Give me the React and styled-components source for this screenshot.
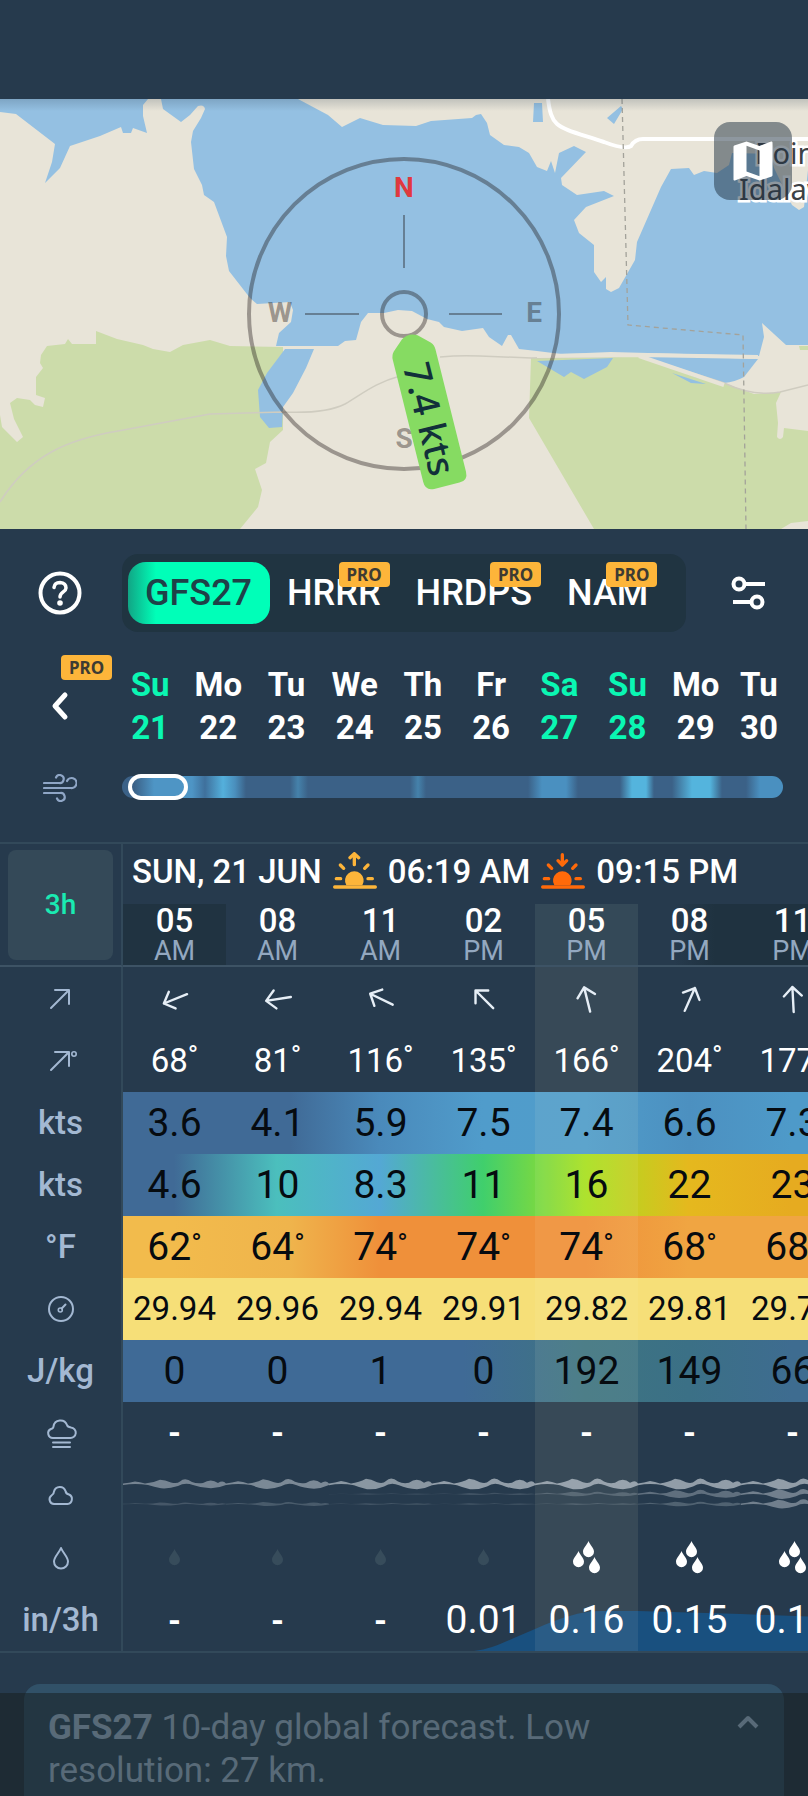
import React from "react";
import { createGlobalStyle, styled } from "styled-components";
import { MdMap } from "react-icons/md";

const models = [
  { name: "GFS27", active: true },
  { name: "HRRR", pro: true },
  { name: "HRDPS", pro: true },
  { name: "NAM", pro: true },
];

const days = [
  { name: "Su", date: 21, weekend: true },
  { name: "Mo", date: 22 },
  { name: "Tu", date: 23 },
  { name: "We", date: 24 },
  { name: "Th", date: 25 },
  { name: "Fr", date: 26 },
  { name: "Sa", date: 27, weekend: true },
  { name: "Su", date: 28, weekend: true },
  { name: "Mo", date: 29 },
  { name: "Tu", date: 30 },
];

const hours = ["05 AM", "08 AM", "11 AM", "02 PM", "05 PM", "08 PM", "11 PM"];
const directions = [68, 81, 116, 135, 166, 204, 177];
const windSpeed = ["3.6", "4.1", "5.9", "7.5", "7.4", "6.6", "7.3"];
const windGust = ["4.6", "10", "8.3", "11", "16", "22", "23"];
const temperature = [62, 64, 74, 74, 74, 68, 68];
const pressure = ["29.94", "29.96", "29.94", "29.91", "29.82", "29.81", "29.79"];
const cape = [0, 0, 1, 0, 192, 149, 66];
const rain = ["-", "-", "-", "0.01", "0.16", "0.15", "0.14"];
const current = 4;

// [opacity, thickness] of the high, middle and low cloud layer
const clouds = [
  [[0.45, 1], [0, 0], [0.18, 0.35]],
  [[0.48, 1.1], [0, 0], [0.2, 0.45]],
  [[0.56, 1.2], [0.12, 0.15], [0.16, 0.2]],
  [[0.6, 1.2], [0.15, 0.25], [0.16, 0.15]],
  [[0.6, 1.2], [0.22, 0.5], [0.18, 0.2]],
  [[0.6, 1.2], [0.32, 0.9], [0.24, 0.5]],
  [[0.6, 1.2], [0.42, 1.1], [0.42, 1]],
];

const rainAreas = [
  null,
  null,
  null,
  "M42 62C62 60 76 51 103 40V62Z",
  "M0 40C25 29 45 22 66 22H103V62H0Z",
  "M0 22L103 25V62H0Z",
  "M0 25L103 29V62H0Z",
];

const WindArrow = ({ degrees }) => (
  <Icon width="32" height="32" viewBox="-16 -16 32 32">
    <g transform={`rotate(${degrees + 180})`} stroke="#e6eef6" strokeWidth="2.4">
      <path d="M0 13V-12M-9 -3L0 -12L9 -3" />
    </g>
  </Icon>
);

const CloudCell = ({ layers }) => (
  <CellDrawing viewBox="0 0 103 62" preserveAspectRatio="none">
    {layers.map(([opacity, scale], i) => (
      <path
        key={i}
        transform={`translate(0 ${20 + i * 10}) scale(1 ${scale})`}
        opacity={opacity}
        fill="#d9e0e6"
        d="M0 -.5Q6 -1 12 -2.5Q17 -2 22 -.5Q30 -1 37 -4.3Q42 -4 48 -1.5Q54 0 57 -2.5Q62 -7 69 -2Q74 0 80 -1Q88 -6 95 -1Q100 -4 103 -.5V1Q96 4 88 4.3Q78 4 70 1Q62 -2 55 2Q46 5 38 4.3Q31 3 25 1Q12 -1 0 1Z"
      />
    ))}
  </CellDrawing>
);

const Drop = ({ x = 0, y = 0 }) => (
  <path
    transform={`translate(${x} ${y})`}
    d="M5.5 0C7 4 11 7 11 10.7A5.5 5.5 0 0 1 0 10.7C0 7 4 4 5.5 0Z"
  />
);

const SunIcon = ({ color, down }) => (
  <Icon width="44" height="38" viewBox="0 0 132 114" stroke={color} strokeWidth="10">
    <path d="M5 105H127M64 8V38M10 80H23M105 80H118M22 39L32 49M105 39L95 49" />
    <path d={down ? "M51 26L64 39L77 26" : "M51 17L64 5L77 17"} />
    <path d="M40 100A28 28 0 1 1 88 100Z" fill={color} stroke="none" />
  </Icon>
);

const MapDrawing = () => (
  <MapSvg viewBox="0 0 808 430" preserveAspectRatio="xMidYMid slice">
    <defs>
      <linearGradient id="mapShade" x1="0" y1="0" x2="0" y2="1">
        <stop offset="0" stopColor="#263a4d" stopOpacity="0.2" />
        <stop offset="1" stopColor="#263a4d" stopOpacity="0" />
      </linearGradient>
    </defs>
    <rect width="808" height="430" fill="#e8e4d8" />
    <g fill="#ccdcaa">
      <path d="M0 430V316L2 328L17 343L23 338L14 320L10 304L17 299L30 301L35 306L43 308L45 299L36 296V278L43 269L40 264L41 256L47 247L65 245L68 240L72 245H96V232L117 240L143 246L153 250L170 253L183 246L210 241L230 247L283 248V331L270 343L266 364L255 370L262 391L258 408L240 430Z" />
      <path d="M531 259L611 258L639 258L724 284L754 295L781 293L776 304L778 324L777 338Q780 342 783 338L784 329L808 332V422L791 424L781 430H594L529 319Z" />
      <path d="M799 247H808V251H800Z" />
    </g>
    <g fill="#94c0e2">
      <path d="M0 0V13L16 15L55 45L52 63L45 84L60 69L70 47L100 37L121 28L123 34H131L133 29L147 34L143 17V6L148 0Z" />
      <path d="M161 0L163 10L181 23L190 16L198 7Q204 5 205 10L201 19L193 32L191 43L194 70L202 86L204 96L214 103L227 138L226 157L229 172L250 199L257 205L290 203L293 211L291 223L279 234L276 247H338L345 242L356 241L361 223L368 214H384L398 211L412 212L427 220L439 223L444 228L462 232L483 229L489 238L502 247L508 236H511L519 250L537 252L561 255L611 253L759 257L764 238L762 224L786 246H808V71L804 108L799 111L792 106L774 69L770 55L732 54L729 66L717 74L704 72L694 76L689 69L671 70L661 88L637 143L635 161L619 189L611 193L606 190V178L601 183L594 173V146L579 134L574 121L586 108L614 97L604 92L577 96L562 86L561 79L586 53L574 47L559 54L555 74L551 62L547 72L537 68L529 54L519 48L504 46L490 36L487 24L481 15L476 16L472 19L431 22L416 27L383 26L360 19L342 28L328 16L298 0Z" />
      <path d="M285 250H314L306 269L293 294L283 308L282 328L269 329L260 318L258 291L267 274Z" />
      <path d="M537 262L564 278L571 273L584 280L607 268L613 259Z" />
      <path d="M639 256L758 260L744 278Q735 283 724 284L697 279Z" />
      <path d="M672 274L706 285L691 284ZM534 4H542L543 23H533ZM607 19L621 7L623 10L614 25Z" />
    </g>
    <path d="M548 0C552 30 556 27 604 43Q625 51 631 47Q635 40 643 40H808" fill="none" stroke="#fff" strokeWidth="4" />
    <g fill="none" stroke="#cfccc0" strokeWidth="1.5">
      <path d="M0 403C30 355 70 340 118 332L210 315L283 313Q325 315 345 305C365 293 375 284 400 277" />
      <path d="M440 258Q460 256 480 257L531 259L639 257L724 284Q754 298 780 293L808 286" />
    </g>
    <path d="M537 257L639 256L758 258" fill="none" stroke="#e8e4d8" strokeWidth="4" />
    <path d="M639 257L724 286" stroke="#e8e4d8" strokeWidth="4" />
    <path d="M622 0L628 226L743 236L746 430" fill="none" stroke="#a3a29a" strokeWidth="1.3" strokeDasharray="5 4" />
    <PlaceName x="755" y="65">Point</PlaceName>
    <PlaceName x="739" y="101">Idalaw</PlaceName>
    <rect width="808" height="12" fill="url(#mapShade)" />
    <g fill="none" stroke="#1e1614" strokeOpacity="0.38">
      <circle cx="404" cy="215" r="155" strokeWidth="4" />
      <circle cx="404" cy="215" r="22" strokeWidth="4" />
      <path d="M404 116V169M305 215H359M449 215H502" strokeWidth="2" />
    </g>
    <CompassLetter x="404" y="98" $north>N</CompassLetter>
    <CompassLetter x="280" y="223">W</CompassLetter>
    <CompassLetter x="534" y="223">E</CompassLetter>
    <CompassLetter x="404" y="349">S</CompassLetter>
    <g transform="translate(404 215) rotate(76)">
      <path
        d="M24 -8L34 -19Q37 -22 42 -22H168Q177 -22 177 -13V13Q177 22 168 22H42Q37 22 34 19L24 8Q19 0 24 -8Z"
        fill="#86db62"
      />
      <SpeedText x="108" y="14">7.4 kts</SpeedText>
    </g>
  </MapSvg>
);

const HelpIcon = () => (
  <Icon width="44" height="44" viewBox="0 0 44 44" stroke="#fff" strokeWidth="4">
    <circle cx="22" cy="22" r="19.5" />
    <path d="M16 16.5Q16.5 11.5 22 11.5Q28 12 28 17C28 21 22 21 22 26" strokeWidth="3.5" />
    <circle cx="22" cy="32" r="2.8" fill="#fff" stroke="none" />
  </Icon>
);

const SettingsIcon = () => (
  <Icon width="36" height="36" viewBox="0 0 36 36" stroke="#fff" strokeWidth="4">
    <circle cx="9" cy="9" r="5.5" />
    <circle cx="27" cy="27" r="5.5" />
    <path d="M15 9H35M3 27H21" strokeLinecap="butt" />
  </Icon>
);

const WindIcon = () => (
  <Icon width="34" height="28" viewBox="0 0 34 28" stroke="#8fa6c6" strokeWidth="2.2">
    <path d="M1 9H16A4 4 0 1 0 13 3.5" />
    <path d="M1 14H28A5 5 0 1 0 24 7" />
    <path d="M1 19H17A4 4 0 1 1 14 24.5" />
  </Icon>
);

const SideArrow = ({ degree }) => (
  <Icon width="32" height="24" viewBox="0 0 32 24" stroke="#a3b8d2" strokeWidth="2">
    <path d="M6 21L24 3M10 3H24V17" />
    {degree && <circle cx="29" cy="5" r="2.2" strokeWidth="1.6" />}
  </Icon>
);

const GaugeIcon = () => (
  <Icon width="28" height="28" viewBox="0 0 28 28" stroke="#a3b8d2" strokeWidth="2">
    <circle cx="14" cy="14" r="12" />
    <circle cx="13.3" cy="15" r="2" strokeWidth="1.6" />
    <path d="M14.7 13.5L18.5 9.5" />
  </Icon>
);

const FogIcon = () => (
  <Icon width="32" height="32" viewBox="0 0 32 32" stroke="#a3b8d2" strokeWidth="2">
    <path d="M8 21H25A5 5 0 0 0 26 10.5Q22.5 10 22 8A7 7 0 0 0 8.5 9.5Q8.3 11.5 6 12A4.7 4.7 0 0 0 8 21Z" />
    <path d="M8 25.5H25M8 30H25" />
  </Icon>
);

const CloudIcon = () => (
  <Icon width="28" height="24" viewBox="0 0 28 24" stroke="#a3b8d2" strokeWidth="2">
    <path d="M7 21H20.5A5 5 0 0 0 22 11.5Q19 11 18.5 8A6 6 0 0 0 7 8.5Q7 11 4.5 12.5A4.7 4.7 0 0 0 7 21Z" />
  </Icon>
);

const DropIcon = () => (
  <Icon width="18" height="24" viewBox="0 0 18 24" stroke="#a3b8d2" strokeWidth="2">
    <path d="M9 2C11 7 16 11 16 15.5A7 7 0 0 1 2 15.5C2 11 7 7 9 2Z" />
  </Icon>
);

const Row = ({ label, height = 62, background, tone, size, children }) => (
  <StyledRow $height={height} $background={background}>
    <RowLabel scope="row">{label}</RowLabel>
    {children.map((child, i) => (
      <Cell key={i} $current={i === current} $dark={tone === "dark"} $size={size}>
        {child}
      </Cell>
    ))}
  </StyledRow>
);

const App = () => {
  return (
    <Page>
      <GlobalStyle />
      <StatusBar />
      <MapPanel>
        <MapDrawing />
        <MapButton aria-label="Map layers">
          <MdMap size={52} />
        </MapButton>
      </MapPanel>

      <ModelRow>
        <IconButton aria-label="Help">
          <HelpIcon />
        </IconButton>
        <ModelBar>
          {models.map(({ name, active, pro }) => (
            <ModelButton key={name} $active={active}>
              {name}
              {pro && <ModelBadge>PRO</ModelBadge>}
            </ModelButton>
          ))}
        </ModelBar>
        <IconButton aria-label="Settings">
          <SettingsIcon />
        </IconButton>
      </ModelRow>

      <DayRow>
        <IconButton aria-label="Previous days">
          <Icon width="20" height="30" viewBox="0 0 20 30" stroke="#fff" strokeWidth="5">
            <path d="M15 4L5 15L15 26" />
          </Icon>
          <BackBadge>PRO</BackBadge>
        </IconButton>
        <DayList>
          {days.map(({ name, date, weekend }) => (
            <Day key={date} $weekend={weekend}>
              <span>{name}</span>
              <span>{date}</span>
            </Day>
          ))}
        </DayList>
      </DayRow>

      <StripRow>
        <StripLabel htmlFor="timeline">
          <WindIcon />
        </StripLabel>
        <Timeline id="timeline" type="range" aria-label="Forecast time" step="any" defaultValue="1" />
      </StripRow>

      <TableFrame>
        <Table>
          <colgroup>
            <LabelCol />
            {hours.map((hour) => (
              <HourCol key={hour} />
            ))}
          </colgroup>
          <thead>
            <tr>
              <StepCell rowSpan="2">
                <StepButton>3h</StepButton>
              </StepCell>
              <DateCell colSpan="7">
                <DateLine>
                  <span>SUN, 21 JUN</span>
                  <SunIcon color="#fdb53a" />
                  <span>06:19 AM</span>
                  <SunIcon color="#ff6a0a" down />
                  <span>09:15 PM</span>
                </DateLine>
              </DateCell>
            </tr>
            <HourRow>
              {hours.map((hour, i) => (
                <HourCell key={hour} scope="col" $current={i === current}>
                  {hour.slice(0, 2)}
                  <HalfDay>{hour.slice(3)}</HalfDay>
                </HourCell>
              ))}
            </HourRow>
          </thead>
          <tbody>
            <Row label={<SideArrow />} height={63}>
              {directions.map((degrees) => (
                <WindArrow degrees={degrees} />
              ))}
            </Row>
            <Row label={<SideArrow degree />}>
              {directions.map((degrees) => (
                <>
                  {degrees}
                  <Degree>°</Degree>
                </>
              ))}
            </Row>
            <Row
              label="kts"
              tone="dark"
              size={39}
              background="linear-gradient(to right, #406a96 290px, #4a8abb 380px, #509ccb 483px, #509dcb 586px, #4c90c0 689px, #4e9ac9 792px)"
            >
              {windSpeed}
            </Row>
            <Row
              label="kts"
              tone="dark"
              size={39}
              background="linear-gradient(to right, #406a96 174px, #4bbfbd 277px, #54a8d4 380px, #40cf6c 483px, #a8e020 586px, #e5b81e 689px, #e6ab20 792px)"
            >
              {windGust}
            </Row>
            <Row
              label="°F"
              tone="dark"
              size={39}
              background="linear-gradient(to right, #f2bb4c 174px, #efb44c 290px, #ef903a 380px, #ef903a 586px, #f0a542 689px)"
            >
              {temperature.map((value) => (
                <>
                  {value}
                  <Degree>°</Degree>
                </>
              ))}
            </Row>
            <Row label={<GaugeIcon />} tone="dark" background="#f6df78">
              {pressure}
            </Row>
            <Row
              label="J/kg"
              tone="dark"
              size={39}
              background="linear-gradient(to right, #3f6a96 463px, #3e7482 586px, #3b7086 689px, #3e6c90 792px)"
            >
              {cape}
            </Row>
            <Row label={<FogIcon />}>
              {hours.map(() => (
                <Dash>-</Dash>
              ))}
            </Row>
            <Row label={<CloudIcon />}>
              {clouds.map((layers) => (
                <CloudCell layers={layers} />
              ))}
            </Row>
            <Row label={<DropIcon />} height={63}>
              {hours.map((_, i) =>
                i < current ? (
                  <Icon width="11" height="17" viewBox="0 0 11 17">
                    <g fill="#374c5b">
                      <Drop />
                    </g>
                  </Icon>
                ) : (
                  <Icon width="28" height="34" viewBox="0 0 28 34">
                    <g fill="#fff">
                      <Drop x={10} />
                      <Drop y={10} />
                      <Drop x={16} y={16} />
                    </g>
                  </Icon>
                )
              )}
            </Row>
            <Row label="in/3h" size={39}>
              {rain.map((amount, i) => (
                <>
                  {rainAreas[i] && (
                    <CellDrawing viewBox="0 0 103 62" preserveAspectRatio="none">
                      <path d={rainAreas[i]} fill={i === current ? "#2a5c86" : "#19507f"} />
                    </CellDrawing>
                  )}
                  {amount === "-" ? <Dash>-</Dash> : <Amount>{amount}</Amount>}
                </>
              ))}
            </Row>
          </tbody>
        </Table>
      </TableFrame>

      <InfoCard>
        <p>
          <strong>GFS27</strong> 10-day global forecast. Low resolution: 27 km.
        </p>
        <InfoToggle aria-label="Show more">
          <Icon width="24" height="16" viewBox="0 0 24 16" stroke="#9ab9d4" strokeWidth="4">
            <path d="M3 13L12 4L21 13" strokeLinecap="butt" />
          </Icon>
        </InfoToggle>
      </InfoCard>
      <NavShade />
    </Page>
  );
};

export default App;

const GlobalStyle = createGlobalStyle`
  * {
    box-sizing: border-box;
  }
  body {
    margin: 0;
    background: #263a4d;
  }
  button {
    margin: 0;
    padding: 0;
    border: 0;
    background: none;
    color: inherit;
    font: inherit;
  }
`;
const Page = styled.div`
  position: relative;
  display: flex;
  flex-direction: column;
  min-height: 100vh;
  overflow: hidden;
  background: #263a4d;
  color: #fff;
  font-family: Roboto, "Liberation Sans", sans-serif;
  font-size: 33px;
`;
const Icon = styled.svg`
  display: block;
  flex-shrink: 0;
  margin: 0 auto;
  fill: none;
  stroke-linecap: round;
  stroke-linejoin: round;
`;
const StatusBar = styled.header`
  height: 99px;
`;
const MapPanel = styled.section`
  position: relative;
  height: 430px;
`;
const MapSvg = styled.svg`
  display: block;
  width: 100%;
  height: 100%;
`;
const PlaceName = styled.text`
  font: 29px "Noto Sans", sans-serif;
  fill: #3c4146;
  stroke: #fff;
  stroke-width: 5px;
  paint-order: stroke;
`;
const CompassLetter = styled.text`
  font: 700 28px Roboto, sans-serif;
  text-anchor: middle;
  fill: ${(props) => (props.$north ? "#e0393e" : "rgba(30, 22, 20, 0.4)")};
`;
const SpeedText = styled.text`
  font: 500 37px "Noto Sans", sans-serif;
  text-anchor: middle;
  fill: #12303a;
`;
const MapButton = styled.button`
  position: absolute;
  top: 23px;
  right: 16px;
  display: grid;
  place-items: center;
  width: 78px;
  height: 78px;
  border-radius: 16px;
  background: rgba(30, 48, 64, 0.5);
  color: #fff;
`;
const ModelRow = styled.div`
  display: grid;
  grid-template-columns: 120px auto 1fr;
  column-gap: 2px;
  margin-top: 25px;
`;
const IconButton = styled.button`
  position: relative;
  display: grid;
  place-items: center;
`;
const ModelBar = styled.nav`
  display: flex;
  padding: 8px 20px 8px 6px;
  border-radius: 16px;
  background: #203441;
`;
const ModelButton = styled.button`
  position: relative;
  height: 62px;
  padding: 0 18px 0 17px;
  border-radius: 18px;
  font-size: 36px;
  font-weight: 500;
  color: ${(props) => (props.$active ? "#1f4148" : "#fff")};
  background: ${(props) =>
    props.$active
      ? "linear-gradient(to right, #11a585, #00ffb8 28px)"
      : "transparent"};
`;
const Badge = styled.span`
  position: absolute;
  width: 51px;
  border-radius: 4px;
  background: #fdb53a;
  color: #3d3b33;
  font: 700 17px/25px "Noto Sans", sans-serif;
  text-align: center;
`;
const ModelBadge = styled(Badge)`
  top: 0;
  right: 9px;
`;
const BackBadge = styled(Badge)`
  top: -8px;
  right: 8px;
`;
const DayRow = styled.div`
  display: grid;
  grid-template-columns: 120px 1fr;
  margin-top: 31px;
`;
const DayList = styled.div`
  display: grid;
  grid-template-columns: repeat(9, 68fr) 58fr;
  margin: 0 20px 0 -4px;
`;
const Day = styled.button`
  display: grid;
  font-size: 33px;
  font-weight: 700;
  line-height: 43px;
  color: ${(props) => (props.$weekend ? "#0af7b3" : "#fff")};
`;
const StripRow = styled.div`
  display: grid;
  grid-template-columns: 120px 1fr;
  column-gap: 2px;
  margin: 25px 25px 40px 0;
`;
const StripLabel = styled.label`
  display: grid;
  place-items: center;
`;
const Timeline = styled.input`
  appearance: none;
  width: 100%;
  height: 26px;
  margin: 0;
  background: none;

  &::-webkit-slider-runnable-track {
    height: 22px;
    border-radius: 11px;
    background: linear-gradient(
      to right,
      #3b6187 12px,
      #4e95c5 32px,
      #4e95c5 70px,
      #3f709c 83px,
      #54b0dc 101px,
      #4a8fbd 113px,
      #3b6187 124px,
      #3b6187 168px,
      #4582ab 176px,
      #3b6187 186px,
      #3b6187 288px,
      #4582ab 296px,
      #3b6187 304px,
      #3b6187 406px,
      #4a90c0 420px,
      #4a90c0 444px,
      #3b6187 456px,
      #3b6187 498px,
      #54b4dd 510px,
      #54b4dd 524px,
      #3b6187 532px,
      #3b6187 550px,
      #54b4dd 570px,
      #54b4dd 588px,
      #3b6187 600px,
      #3b6187 624px,
      #4a90c0 638px
    );
  }
  &::-webkit-slider-thumb {
    appearance: none;
    width: 60px;
    height: 26px;
    margin-top: -2px;
    border: 4px solid #fff;
    border-radius: 13px;
    background: transparent;
  }
`;
const TableFrame = styled.div`
  overflow: hidden;
  border-top: 2px solid #32495a;
  border-bottom: 2px solid #32495a;
`;
const Table = styled.table`
  width: 844px;
  table-layout: fixed;
  border-spacing: 0;
  & th,
  & td {
    padding: 0;
  }
`;
const LabelCol = styled.col`
  width: 123px;
`;
const HourCol = styled.col`
  width: 103px;
`;
const StepCell = styled.td`
  border-right: 2px solid #32495a;
  border-bottom: 2px solid #3d5365;
`;
const StepButton = styled.button`
  display: block;
  width: 105px;
  height: 110px;
  margin: 0 8px;
  border-radius: 8px;
  background: #344958;
  color: #1aeab2;
  font-size: 28px;
  font-weight: 500;
`;
const DateCell = styled.th`
  height: 60px;
`;
const DateLine = styled.div`
  display: flex;
  align-items: center;
  gap: 11px;
  padding: 0 0 6px 9px;
  font-weight: 500;
  white-space: nowrap;
  & svg {
    margin: 0;
  }
`;
const HourRow = styled.tr`
  background: linear-gradient(
    to right,
    #203341 226px,
    transparent 226px,
    transparent 675px,
    #1f3240 715px
  );
`;
const HourCell = styled.th`
  height: 63px;
  border-bottom: 2px solid #3d5365;
  background: ${(props) => (props.$current ? "#344958" : "transparent")};
  font-weight: 500;
  line-height: 33px;
`;
const HalfDay = styled.div`
  color: #93a8c0;
  font-size: 27px;
  font-weight: 400;
  line-height: 28px;
`;
const StyledRow = styled.tr`
  height: ${(props) => props.$height}px;
  background: ${(props) => props.$background || "transparent"};
`;
const RowLabel = styled.th`
  border-right: 2px solid #32495a;
  background: #263a4d;
  color: #a3b8d2;
  font-weight: 500;
  line-height: 40px;
`;
const Cell = styled.td`
  position: relative;
  background: ${(props) =>
    props.$current ? "rgba(255, 250, 220, 0.08)" : "transparent"};
  color: ${(props) => (props.$dark ? "#060b10" : "#fff")};
  font-size: ${(props) => props.$size || 33}px;
  line-height: 40px;
  text-align: center;
`;
const CellDrawing = styled.svg`
  position: absolute;
  inset: 0;
  width: 100%;
  height: 100%;
`;
const Degree = styled.sup`
  font-size: 28px;
  line-height: 0;
  vertical-align: 7px;
`;
const Dash = styled.span`
  font-size: 33px;
  font-weight: 700;
`;
const Amount = styled.span`
  position: relative;
`;
const InfoCard = styled.section`
  display: flex;
  flex: 1;
  align-items: flex-start;
  justify-content: space-between;
  margin: 31px 24px 0;
  padding: 22px 24px 0;
  border-radius: 16px 16px 0 0;
  background: #315168;
  color: #9ab9d4;
  font-size: 35px;
  line-height: 43px;
  & p {
    max-width: 600px;
    margin: 0;
  }
`;
const InfoToggle = styled.button`
  display: grid;
  place-items: center;
  height: 32px;
`;
const NavShade = styled.div`
  position: absolute;
  right: 0;
  bottom: 0;
  left: 0;
  height: 103px;
  background: rgba(22, 27, 28, 0.5);
  pointer-events: none;
`;
